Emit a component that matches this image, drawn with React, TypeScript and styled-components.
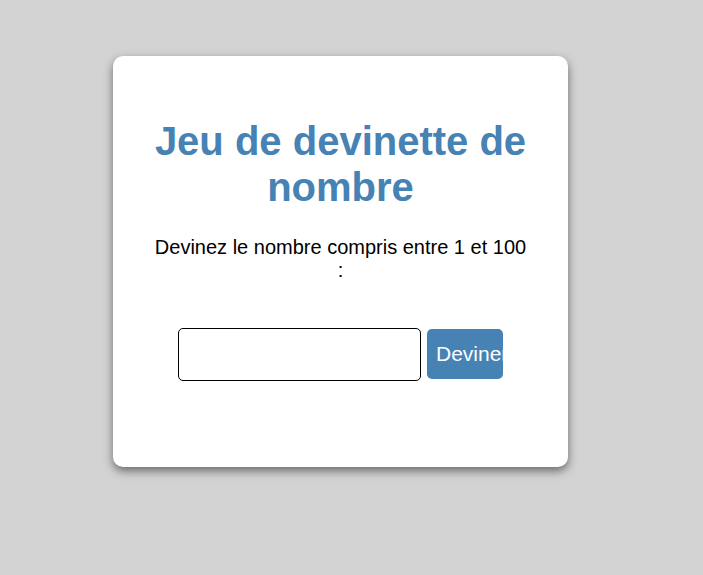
import React from "react";
import styled, { createGlobalStyle } from "styled-components";

const Global = createGlobalStyle`
  html, body { margin: 0; padding: 0; background: #d3d3d3; }
  body { font-family: "Liberation Sans", Arial, sans-serif; }
`;

const Page = styled.div`
  display: flex;
  align-items: flex-start;
  padding: 56px 0 0 113px;
  min-height: 575px;
  box-sizing: border-box;
`;

const Card = styled.div`
  width: 375px;
  padding: 40px;
  background: #ffffff;
  border-radius: 10px;
  box-shadow: 0 4px 10px rgba(0, 0, 0, 0.5);
  text-align: center;
`;

const Title = styled.h1`
  margin: 22px 0 26px;
  font-size: 40px;
  font-weight: bold;
  line-height: 46px;
  color: #4682b4;
`;

const Prompt = styled.p`
  margin: 0;
  font-size: 20px;
  line-height: 23px;
  color: #000;
`;

const Row = styled.div`
  display: flex;
  justify-content: center;
  align-items: flex-start;
  gap: 6px;
  margin: 46px 0 46px;
`;

const Input = styled.input`
  box-sizing: border-box;
  width: 243px;
  height: 53px;
  border: 1px solid #000;
  border-radius: 5px;
  padding: 0 10px;
  font-size: 20px;
  font-family: "Liberation Sans", Arial, sans-serif;
  outline: none;
`;

const Button = styled.button`
  box-sizing: border-box;
  width: 76px;
  height: 50px;
  margin-top: 1px;
  padding: 0 0 0 9px;
  border: none;
  border-radius: 5px;
  background: #4682b4;
  color: #fff;
  font-size: 21px;
  font-family: "Liberation Sans", Arial, sans-serif;
  text-align: left;
  cursor: pointer;
`;

const ButtonLabel = styled.span`
  display: block;
  width: 67px;
  overflow: hidden;
  white-space: nowrap;
`;

export default function App() {
  return (
    <>
      <Global />
      <Page>
        <Card>
          <Title>Jeu de devinette de nombre</Title>
          <Prompt>Devinez le nombre compris entre 1 et 100 :</Prompt>
          <Row>
            <Input type="number" />
            <Button>
              <ButtonLabel>Deviner</ButtonLabel>
            </Button>
          </Row>
        </Card>
      </Page>
    </>
  );
}
